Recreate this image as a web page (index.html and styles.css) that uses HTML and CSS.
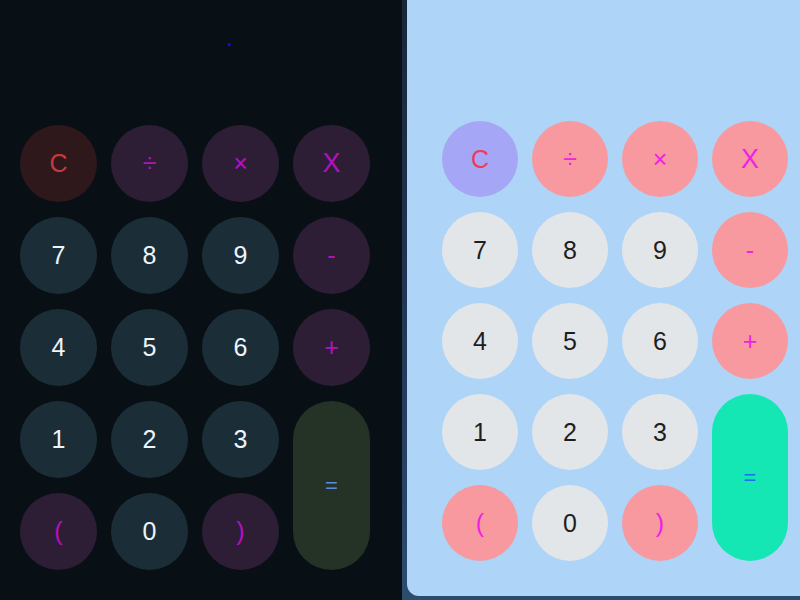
FILE: index.html
```html
<!DOCTYPE html>
<html lang="en">
<head>
<meta charset="utf-8">
<title>Calculator</title>
<link rel="stylesheet" href="styles.css">
</head>
<body>
<div class="stage">
  <section class="calc calc-dark">
    <div class="display"><span class="cursor">.</span></div>
    <div class="keys">
      <button class="key clear">C</button>
      <button class="key op">÷</button>
      <button class="key op">×</button>
      <button class="key op big">X</button>
      <button class="key num">7</button>
      <button class="key num">8</button>
      <button class="key num">9</button>
      <button class="key op">-</button>
      <button class="key num">4</button>
      <button class="key num">5</button>
      <button class="key num">6</button>
      <button class="key op">+</button>
      <button class="key num">1</button>
      <button class="key num">2</button>
      <button class="key num">3</button>
      <button class="key eq">=</button>
      <button class="key op">(</button>
      <button class="key num">0</button>
      <button class="key op">)</button>
    </div>
  </section>
  <section class="calc calc-light">
    <div class="display"></div>
    <div class="keys">
      <button class="key clear">C</button>
      <button class="key op">÷</button>
      <button class="key op">×</button>
      <button class="key op big">X</button>
      <button class="key num">7</button>
      <button class="key num">8</button>
      <button class="key num">9</button>
      <button class="key op">-</button>
      <button class="key num">4</button>
      <button class="key num">5</button>
      <button class="key num">6</button>
      <button class="key op">+</button>
      <button class="key num">1</button>
      <button class="key num">2</button>
      <button class="key num">3</button>
      <button class="key eq">=</button>
      <button class="key op">(</button>
      <button class="key num">0</button>
      <button class="key op">)</button>
    </div>
  </section>
</div>
</body>
</html>
```

FILE: styles.css
```css
html, body {
  margin: 0;
  padding: 0;
  height: 600px;
  overflow: hidden;
}

body {
  background: linear-gradient(180deg, #18263a 0%, #22395a 60%, #2c4c6e 100%);
  font-family: "Liberation Sans", Arial, sans-serif;
}

.stage {
  display: flex;
  gap: 5px;
  align-items: flex-start;
  width: 840px;
  height: 600px;
}

.calc {
  flex: none;
  box-sizing: border-box;
  display: flex;
  flex-direction: column;
}

.calc-dark {
  width: 402px;
  height: 600px;
  background: #081016;
  padding-left: 20px;
}

.calc-light {
  width: 430px;
  height: 616px;
  margin-top: -20px;
  background: #aed4f7;
  border-radius: 12px;
  padding-left: 35px;
}

.calc-dark .display {
  height: 125px;
  box-sizing: border-box;
  padding: 30px 0 0 207px;
  font-size: 18px;
  font-weight: bold;
  line-height: 20px;
  color: #0a0aff;
}

.calc-light .display {
  height: 141px;
}

.keys {
  display: grid;
  grid-template-columns: repeat(4, 77px);
  grid-auto-rows: 77px;
  column-gap: 14px;
  row-gap: 15px;
}

.calc-light .keys {
  grid-template-columns: repeat(4, 76px);
  grid-auto-rows: 76px;
  column-gap: 14px;
  row-gap: 15px;
}

.key {
  border: none;
  border-radius: 50%;
  padding: 0;
  margin: 0;
  font-family: "Liberation Sans", Arial, sans-serif;
  font-size: 25px;
  display: flex;
  align-items: center;
  justify-content: center;
}

.key.eq {
  grid-column: 4;
  grid-row: 4 / span 2;
  border-radius: 40px;
  font-size: 22px;
}

.key.op.big {
  font-size: 27px;
}

/* dark theme */
.calc-dark .num { background: #1b2e37; color: #eef4fa; }
.calc-dark .op { background: #2d1e36; color: #b410c0; }
.calc-dark .clear { background: #2e181c; color: #c8383c; }
.calc-dark .eq { background: #243325; color: #5a8ae6; }

/* light theme */
.calc-light .num { background: #e3e6e9; color: #1e1e1e; }
.calc-light .op { background: #f7999f; color: #f020e6; }
.calc-light .clear { background: #a5a6f5; color: #ec3c5a; }
.calc-light .eq { background: #14e6b4; color: #1a6ef0; }
```
